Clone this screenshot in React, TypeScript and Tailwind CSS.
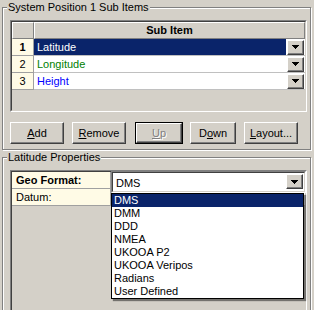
import React from 'react'

const raised = 'border border-t-white border-l-white border-b-[#404040] border-r-[#404040] shadow-[inset_-1px_-1px_0_#808080]'

function Arrow() {
  return (
    <svg width="7" height="4" viewBox="0 0 7 4" shapeRendering="crispEdges">
      <path d="M0 0h7v1H0zM1 1h5v1H1zM2 2h3v1H2zM3 3h1v1H3z" fill="#000" />
    </svg>
  )
}

function DropBtn() {
  return (
    <div className={`w-[17px] h-[15px] shrink-0 bg-[#d4d0c8] flex items-center justify-center ${raised}`}>
      <Arrow />
    </div>
  )
}

const rows = [
  { n: '1', label: 'Latitude', color: 'text-white', selected: true },
  { n: '2', label: 'Longitude', color: 'text-[#008000]', selected: false },
  { n: '3', label: 'Height', color: 'text-[#0000ff]', selected: false },
]

const formats = ['DMS', 'DMM', 'DDD', 'NMEA', 'UKOOA P2', 'UKOOA Veripos', 'Radians', 'User Defined']

function Btn({ children, disabled, def }: { children: React.ReactNode; disabled?: boolean; def?: boolean }) {
  const inner = (
    <div className={`h-full flex items-center justify-center bg-[#d4d0c8] ${raised} ${disabled ? 'text-[#808080] [text-shadow:1px_1px_0_#fff]' : ''}`}>
      {children}
    </div>
  )
  if (def) return <div className="h-full border border-black">{inner}</div>
  return inner
}

export default function App() {
  return (
    <div className="w-[314px] h-[310px] overflow-hidden bg-[#d4d0c8] pl-[2px] pt-[7px] font-['Liberation_Sans',Arial,sans-serif] text-[11px] leading-[13px] text-black">
      {/* System Position 1 Sub Items */}
      <div className="w-[309px] h-[143px] border border-[#808080] shadow-[inset_1px_1px_0_#fff,1px_1px_0_#fff] flex flex-col">
        <div className="-mt-[7px] ml-[4px] px-[1px] w-fit bg-[#d4d0c8]">System Position 1 Sub Items</div>

        <div className="ml-[7px] mt-[6px] w-[297px] h-[92px] border border-t-[#808080] border-l-[#808080] border-b-white border-r-white">
          <div className="h-full border border-t-[#404040] border-l-[#404040] border-b-[#d4d0c8] border-r-[#d4d0c8] flex flex-col">
            <div className="flex h-[17px]">
              <div className="w-[22px] border border-t-white border-l-white border-b-[#808080] border-r-[#808080]" />
              <div className="flex-1 border border-t-white border-l-white border-b-[#808080] border-r-[#808080] font-bold text-center leading-[15px]">
                Sub Item
              </div>
            </div>
            {rows.map((r) => (
              <div key={r.n} className="flex h-[17px]">
                <div className={`w-[22px] bg-[#fffbe6] border-r border-b border-[#a0a0a0] text-center leading-[16px] ${r.selected ? 'font-bold' : ''}`}>
                  {r.n}
                </div>
                <div className="flex-1 flex items-center bg-white border-b border-[#c0c0c0] pr-[1px]">
                  <div className={`flex-1 h-full pl-[3px] mr-[1px] leading-[16px] ${r.color} ${r.selected ? 'bg-[#0a246a]' : ''}`}>
                    {r.label}
                  </div>
                  <DropBtn />
                </div>
              </div>
            ))}
          </div>
        </div>

        <div className="ml-[7px] mt-[10px] h-[22px] flex">
          <div className="w-[54px]"><Btn><span><u>A</u>dd</span></Btn></div>
          <div className="w-[54px] ml-[8px]"><Btn><span><u>R</u>emove</span></Btn></div>
          <div className="w-[48px] ml-[9px]"><Btn disabled def><span><u>U</u>p</span></Btn></div>
          <div className="w-[46px] ml-[7px]"><Btn><span>D<u>o</u>wn</span></Btn></div>
          <div className="w-[54px] ml-[8px]"><Btn><span><u>L</u>ayout...</span></Btn></div>
        </div>
      </div>

      {/* Latitude Properties */}
      <div className="mt-[7px] w-[309px] h-[200px] border border-[#808080] shadow-[inset_1px_1px_0_#fff,1px_1px_0_#fff] flex flex-col">
        <div className="-mt-[7px] ml-[4px] px-[1px] w-fit bg-[#d4d0c8]">Latitude Properties</div>

        <div className="ml-[7px] mt-[6px] w-[297px] h-[200px] border border-t-[#808080] border-l-[#808080] border-b-white border-r-white">
          <div className="relative h-full border border-t-[#404040] border-l-[#404040] border-b-[#d4d0c8] border-r-[#d4d0c8] flex flex-col">
            <div className="flex h-[17px]">
              <div className="w-[99px] bg-[#fffbe6] border-r border-b border-[#a0a0a0] pl-[4px] font-bold leading-[16px]">Geo Format:</div>
              <div className="flex-1 bg-white border-b border-[#c0c0c0]" />
            </div>
            <div className="flex h-[17px]">
              <div className="w-[99px] bg-[#fffbe6] border-r border-b border-[#a0a0a0] pl-[4px] leading-[16px]">Datum:</div>
              <div className="flex-1 bg-white border-b border-[#c0c0c0]" />
            </div>

            {/* open combo editor */}
            <div className="absolute left-[99px] -top-[1px] w-[195px] h-[22px] border border-t-[#808080] border-l-[#808080] border-b-white border-r-white">
              <div className="h-full bg-white border border-t-[#404040] border-l-[#404040] border-b-[#d4d0c8] border-r-[#d4d0c8] flex items-start pt-[1px] pr-[1px]">
                <div className="flex-1 pl-[3px] pt-[2px] leading-[15px]">DMS</div>
                <DropBtn />
              </div>
            </div>

            {/* dropdown list */}
            <div className="absolute left-[99px] top-[21px] w-[193px] border border-black bg-white shadow-[2px_2px_1px_rgba(0,0,0,0.45)]">
              {formats.map((f, i) => (
                <div key={f} className={`h-[13px] leading-[13px] pl-[2px] ${i === 0 ? 'bg-[#0a246a] text-white' : ''}`}>
                  {f}
                </div>
              ))}
            </div>
          </div>
        </div>
      </div>
    </div>
  )
}
